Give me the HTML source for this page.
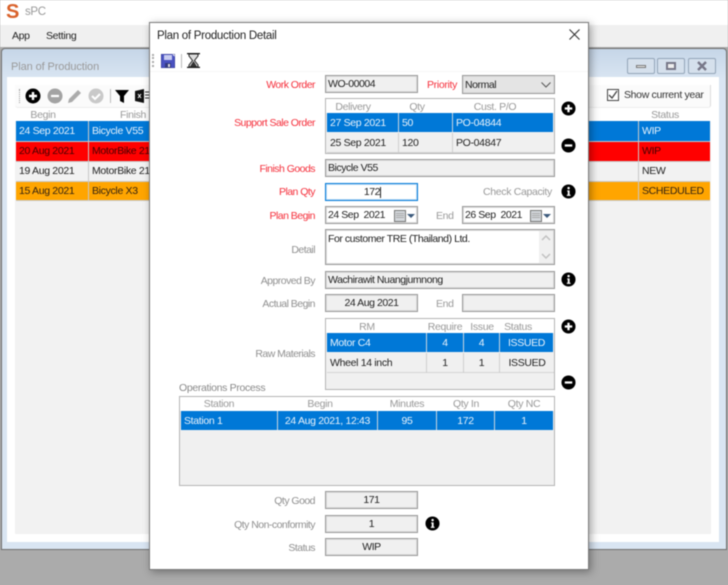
<!DOCTYPE html>
<html><head><meta charset="utf-8">
<style>
html,body{margin:0;padding:0;width:728px;height:585px;overflow:hidden;background:#ababab}
#r{position:absolute;left:0;top:0;width:728px;height:585px;overflow:hidden;font-family:"Liberation Sans",sans-serif;font-size:10.5px;letter-spacing:-.33px;color:#222;filter:blur(.45px)}
#r div,#r svg{position:absolute;box-sizing:border-box}
.t{white-space:nowrap;line-height:14px;height:14px}
.lb{white-space:nowrap;line-height:14px;height:14px;right:413px;text-align:right;color:#909090;letter-spacing:-.53px}
.red{color:#f5303c}
.in{background:#f0f0f0;border:1px solid #999;box-shadow:inset 0 0 0 1px #dcdcdc;line-height:17px;padding-left:2px;white-space:nowrap;color:#222;letter-spacing:-.45px}
.c{text-align:center;padding-left:0}
.g{background:#f0f0f0;border:1px solid #b4b4b4}
.h{color:#999;text-align:center;line-height:14px;height:14px;white-space:nowrap}
.cell{line-height:20px;height:19px;white-space:nowrap;padding-left:3px;border-right:1px solid #c8d4e0}
.sel{background:#0078d7;color:#e8f2fb}
.nor{background:#f0f0f0;color:#222;border-right-color:#cfcfcf;border-bottom:1px solid #d4d4d4}
.cc{text-align:center;padding-left:0}
</style></head><body>
<div id="r">
<svg width="0" height="0" style="position:absolute">
<symbol id="plus" viewBox="0 0 16 16"><circle cx="8" cy="8" r="7.5" fill="#000"/><path d="M8 4v8M4 8h8" stroke="#fff" stroke-width="2.4"/></symbol>
<symbol id="minus" viewBox="0 0 16 16"><circle cx="8" cy="8" r="7.5" fill="#000"/><path d="M4 8h8" stroke="#fff" stroke-width="2.4"/></symbol>
<symbol id="info" viewBox="0 0 16 16"><circle cx="8" cy="8" r="7.5" fill="#000"/><path d="M6.6 6.8h2.6v4.6h1v1.2H6.2v-1.2h1V8H6.6z" fill="#fff"/><circle cx="8.1" cy="4.4" r="1.3" fill="#fff"/></symbol>
<symbol id="cal" viewBox="0 0 24 12"><rect x=".5" y=".5" width="11" height="11" fill="#d4d8dc" stroke="#777"/><path d="M2 3.500h8M2 5.500h8M2 7.500h8" stroke="#aaa"/><path d="M13 4h8l-4 4z" fill="#3c5a7c"/></symbol>
</svg>

<!-- app chrome -->
<div style="left:0;top:0;width:728px;height:25px;background:#fff"></div>
<div class="t" style="left:6px;top:1px;font:bold 20px 'Liberation Sans',sans-serif;letter-spacing:0;line-height:22px;height:22px;color:#d9622b">S</div>
<div class="t" style="left:25px;top:5px;color:#999;font-size:11.500px">sPC</div>
<div style="left:0;top:25px;width:728px;height:22px;background:#f0f0f0"></div>
<div class="t" style="left:12px;top:29px">App</div>
<div class="t" style="left:46px;top:29px">Setting</div>

<!-- child window -->
<div style="left:1px;top:48px;width:726px;height:502px;background:linear-gradient(#c6d6e8,#d9e5f2 30px);border:1px solid #6f6f6f;border-radius:4px 4px 0 0"></div>
<div style="left:7px;top:77px;width:712px;height:465px;background:#fff"></div>
<div style="left:15px;top:121px;width:696px;height:413px;background:#f2f2f2"></div>
<div class="t" style="left:11px;top:60px;color:#9a9a9a;font-size:11px;letter-spacing:-.1px">Plan of Production</div>
<div style="left:627px;top:58px;width:28px;height:16px;border:1px solid #93a5b8;border-radius:2px;background:#d5e0ec"></div>
<div style="left:636px;top:65px;width:10px;height:3px;background:#eee;border:1px solid #777"></div>
<div style="left:657px;top:58px;width:28px;height:16px;border:1px solid #93a5b8;border-radius:2px;background:#d5e0ec"></div>
<div style="left:666px;top:62px;width:10px;height:8px;background:#eee;border:2px solid #778"></div>
<div style="left:688px;top:58px;width:28px;height:16px;border:1px solid #93a5b8;border-radius:2px;background:#d5e0ec"></div>
<svg style="left:697px;top:61px" width="10" height="10"><path d="M1 1l8 8M9 1l-8 8" stroke="#778" stroke-width="2.4"/></svg>

<!-- child toolbar -->
<div style="left:15px;top:85px;width:696px;height:23px;background:#fbfbfb;border-right:1px solid #dcdcdc;border-bottom:1px solid #eee;border-radius:0 0 3px 3px"></div>
<div style="left:19px;top:89px;width:1px;height:14px;border-left:1px dotted #999"></div>
<svg style="left:25px;top:88px" width="16" height="16"><use href="#plus"/></svg>
<svg style="left:47px;top:88px" width="16" height="16"><circle cx="8" cy="8" r="7.5" fill="#a3a3a3"/><path d="M4 8h8" stroke="#fff" stroke-width="2.2"/></svg>
<svg style="left:67px;top:88px" width="16" height="16"><path d="M1 15l1-4L11 2l3 3-9 9z" fill="#ababab"/></svg>
<svg style="left:88px;top:88px" width="16" height="16"><circle cx="8" cy="8" r="7.5" fill="#c9c9c9"/><path d="M4 8l3 3 5-5" stroke="#fff" stroke-width="2" fill="none"/></svg>
<div style="left:110px;top:89px;width:1px;height:14px;background:#bbb"></div>
<svg style="left:115px;top:89px" width="15" height="15"><path d="M0 1h14L9 7v7l-4-2V7z" fill="#000"/></svg>
<svg style="left:135px;top:89px" width="15" height="14"><path d="M0 2l9-2v14l-9-2z" fill="#111"/><path d="M3 5l3 4M6 5L3 9" stroke="#fff"/><path d="M10 3h5M10 6h5M10 9h5" stroke="#333"/></svg>
<div class="h" style="left:16px;top:108px;width:54px">Begin</div>
<div class="t" style="left:120px;top:108px;color:#999">Finish G</div>
<div class="h" style="left:638px;top:108px;width:54px">Status</div>
<div style="left:607px;top:89px;width:12px;height:12px;border:1px solid #444;background:#fff"></div>
<svg style="left:608px;top:90px" width="10" height="10"><path d="M1 5l3 3 5-7" stroke="#444" stroke-width="1.3" fill="none"/></svg>
<div class="t" style="left:624px;top:88px;color:#333">Show current year</div>

<!-- background rows -->
<div style="left:16px;top:121px;width:694px;height:20px;background:#0078d7"></div>
<div style="left:16px;top:141px;width:694px;height:20px;background:#f00"></div>
<div style="left:16px;top:161px;width:694px;height:20px;background:#f2f2f2"></div>
<div style="left:16px;top:181px;width:694px;height:19px;background:#ffa500"></div>
<div style="left:16px;top:141px;width:694px;height:1px;background:#c0c8d0"></div>
<div style="left:16px;top:161px;width:694px;height:1px;background:#c8c8c8"></div>
<div style="left:16px;top:181px;width:694px;height:1px;background:#c8c8c8"></div>
<div style="left:16px;top:200px;width:694px;height:1px;background:#c8c8c8"></div>
<div style="left:88px;top:121px;width:1px;height:80px;background:#c8c8c8"></div>
<div style="left:638px;top:121px;width:1px;height:80px;background:#c8c8c8"></div>
<div class="t" style="left:19px;top:124px;color:#e8f2fb">24 Sep 2021</div>
<div class="t" style="left:92px;top:124px;color:#e8f2fb">Bicycle V55</div>
<div class="t" style="left:642px;top:124px;color:#e8f2fb">WIP</div>
<div class="t" style="left:19px;top:144px;color:#400">20 Aug 2021</div>
<div class="t" style="left:92px;top:144px;color:#400">MotorBike 21</div>
<div class="t" style="left:642px;top:144px;color:#400">WIP</div>
<div class="t" style="left:19px;top:164px">19 Aug 2021</div>
<div class="t" style="left:92px;top:164px">MotorBike 21</div>
<div class="t" style="left:642px;top:164px">NEW</div>
<div class="t" style="left:19px;top:184px;color:#321">15 Aug 2021</div>
<div class="t" style="left:92px;top:184px;color:#321">Bicycle X3</div>
<div class="t" style="left:642px;top:184px;color:#321">SCHEDULED</div>

<!-- dialog -->
<div style="left:149px;top:22px;width:440px;height:548px;background:#fff;border:1px solid #7a7a7a;box-shadow:2px 2px 8px rgba(0,0,0,.35)"></div>
<div class="t" style="left:157px;top:29px;color:#222;font-size:11.500px;letter-spacing:-.28px">Plan of Production Detail</div>
<svg style="left:569px;top:29px" width="11" height="11"><path d="M.5.5l10 10M10.500.5l-10 10" stroke="#333" stroke-width="1.1"/></svg>
<div style="left:150px;top:48px;width:438px;height:24px;background:#fff;border-bottom:1px solid #f6f6f6"></div>
<div style="left:152px;top:54px;width:2px;height:13px;border-left:2px dotted #aaa"></div>
<svg style="left:161px;top:54px" width="14" height="14"><path d="M0 0h11l3 3v11H0z" fill="#4a52c0"/><path d="M0 0h14v14H0z" fill="none" stroke="#2b2f88" stroke-width=".8"/><rect x="3" y="1" width="8" height="5" fill="#c8ccf0"/><rect x="4" y="9" width="6" height="5" fill="#333a80"/><rect x="7" y="10" width="2" height="3" fill="#ddd"/></svg>
<div style="left:181px;top:54px;width:1px;height:14px;background:#bbb"></div>
<svg style="left:187px;top:53px" width="13" height="15"><path d="M0 .5h13M0 14.500h13" stroke="#111" stroke-width="1.4"/><path d="M2 1h9v2L7.500 7.500 11 12v2H2v-2l3.500-4.500L2 3z" fill="#ddd" stroke="#222"/><path d="M6.500 8L3 13.500h7z" fill="#333"/></svg>

<div class="lb red" style="top:78px">Work Order</div>
<div class="lb red" style="top:116px">Support Sale Order</div>
<div class="lb red" style="top:162px">Finish Goods</div>
<div class="lb red" style="top:185px">Plan Qty</div>
<div class="lb red" style="top:209px">Plan Begin</div>
<div class="lb" style="top:243px">Detail</div>
<div class="lb" style="top:274px">Approved By</div>
<div class="lb" style="top:297px">Actual Begin</div>
<div class="lb" style="top:347px">Raw Materials</div>
<div class="lb" style="top:518px">Qty Non-conformity</div>
<div class="lb" style="top:494px">Qty Good</div>
<div class="lb" style="top:541px">Status</div>
<div class="t red" style="left:427px;top:78px">Priority</div>
<div class="t" style="left:483px;top:185px;color:#999">Check Capacity</div>
<div class="t" style="left:436px;top:209px;color:#999">End</div>
<div class="t" style="left:436px;top:297px;color:#999">End</div>
<div class="t" style="left:179px;top:381px;color:#8a8a8a">Operations Process</div>

<div class="in" style="left:325px;top:75px;width:93px;height:18px">WO-00004</div>
<div class="in" style="left:462px;top:75px;width:93px;height:19px;background:#e4e4e4;line-height:18px">Normal</div>
<svg style="left:541px;top:82px" width="10" height="6"><path d="M.5.5L5 5 9.500.5" stroke="#555" fill="none"/></svg>

<!-- sale order grid -->
<div class="g" style="left:325px;top:98px;width:230px;height:56px"></div>
<div style="left:326px;top:99px;width:228px;height:14px;background:#fff"></div>
<div class="h" style="left:327px;top:100px;width:52px">Delivery</div>
<div class="h" style="left:399px;top:100px;width:36px">Qty</div>
<div class="h" style="left:453px;top:100px;width:84px">Cust. P/O</div>
<div class="cell sel" style="left:327px;top:113px;width:72px">27 Sep 2021</div>
<div class="cell sel" style="left:399px;top:113px;width:54px">50</div>
<div class="cell sel" style="left:453px;top:113px;width:100px;border-right:0">PO-04844</div>
<div class="cell nor" style="left:327px;top:133px;width:72px;height:20px">25 Sep 2021</div>
<div class="cell nor" style="left:399px;top:133px;width:54px;height:20px">120</div>
<div class="cell nor" style="left:453px;top:133px;width:101px;height:20px;border-right:0">PO-04847</div>
<svg style="left:561px;top:101px" width="15" height="15"><use href="#plus"/></svg>
<svg style="left:561px;top:138px" width="15" height="15"><use href="#minus"/></svg>

<div class="in" style="left:325px;top:159px;width:230px;height:18px">Bicycle V55</div>
<div class="in" style="left:325px;top:183px;width:93px;height:18px;background:#fff;border:1px solid #0078d7;box-shadow:inset 0 0 0 1px #bcdcf5;text-align:right;padding-right:37px">172</div>
<div style="left:380px;top:187px;width:1px;height:11px;background:#222"></div>
<svg style="left:561px;top:184px" width="15" height="15"><use href="#info"/></svg>

<div class="in" style="left:325px;top:206px;width:93px;height:18px;background:#fff;padding-left:2px">24 Sep&nbsp; 2021</div>
<svg style="left:394px;top:210px" width="24" height="12"><use href="#cal"/></svg>
<div class="in" style="left:462px;top:206px;width:93px;height:18px;background:#fff;padding-left:2px">26 Sep&nbsp; 2021</div>
<svg style="left:530px;top:210px" width="24" height="12"><use href="#cal"/></svg>

<div class="in" style="left:325px;top:229px;width:230px;height:36px;background:#fff;line-height:14px;padding-top:2px">For customer TRE (Thailand) Ltd.</div>
<div style="left:539px;top:231px;width:14px;height:32px;background:#f0f0f0"></div>
<svg style="left:541px;top:235px" width="10" height="24"><path d="M1 5l4-4 4 4M1 19l4 4 4-4" stroke="#c0c0c0" stroke-width="1.4" fill="none"/></svg>

<div class="in" style="left:325px;top:271px;width:230px;height:18px">Wachirawit Nuangjumnong</div>
<svg style="left:561px;top:272px" width="15" height="15"><use href="#info"/></svg>
<div class="in c" style="left:325px;top:294px;width:93px;height:18px">24 Aug 2021</div>
<div class="in" style="left:462px;top:294px;width:93px;height:18px"></div>

<!-- RM grid -->
<div class="g" style="left:325px;top:318px;width:230px;height:72px"></div>
<div style="left:326px;top:319px;width:228px;height:14px;background:#fff"></div>
<div class="h" style="left:327px;top:320px;width:80px">RM</div>
<div class="h" style="left:427px;top:320px;width:36px">Require</div>
<div class="h" style="left:464px;top:320px;width:36px">Issue</div>
<div class="h" style="left:500px;top:320px;width:36px">Status</div>
<div class="cell sel" style="left:327px;top:333px;width:100px">Motor C4</div>
<div class="cell sel cc" style="left:427px;top:333px;width:37px">4</div>
<div class="cell sel cc" style="left:464px;top:333px;width:36px">4</div>
<div class="cell sel cc" style="left:500px;top:333px;width:53px;border-right:0">ISSUED</div>
<div class="cell nor" style="left:327px;top:353px;width:100px;height:20px">Wheel 14 inch</div>
<div class="cell nor cc" style="left:427px;top:353px;width:37px;height:20px">1</div>
<div class="cell nor cc" style="left:464px;top:353px;width:36px;height:20px">1</div>
<div class="cell nor cc" style="left:500px;top:353px;width:54px;height:20px;border-right:0">ISSUED</div>
<svg style="left:561px;top:319px" width="15" height="15"><use href="#plus"/></svg>
<svg style="left:561px;top:375px" width="15" height="15"><use href="#minus"/></svg>

<!-- Operations grid -->
<div class="g" style="left:179px;top:396px;width:376px;height:90px"></div>
<div style="left:180px;top:397px;width:374px;height:14px;background:#fff"></div>
<div class="h" style="left:181px;top:397px;width:76px">Station</div>
<div class="h" style="left:278px;top:397px;width:84px">Begin</div>
<div class="h" style="left:378px;top:397px;width:58px">Minutes</div>
<div class="h" style="left:437px;top:397px;width:58px">Qty In</div>
<div class="h" style="left:495px;top:397px;width:58px">Qty NC</div>
<div class="cell sel" style="left:181px;top:411px;width:97px">Station 1</div>
<div class="cell sel cc" style="left:278px;top:411px;width:100px">24 Aug 2021, 12:43</div>
<div class="cell sel cc" style="left:378px;top:411px;width:59px">95</div>
<div class="cell sel cc" style="left:437px;top:411px;width:58px">172</div>
<div class="cell sel cc" style="left:495px;top:411px;width:58px;border-right:0">1</div>

<div class="in c" style="left:325px;top:491px;width:93px;height:18px">171</div>
<div class="in c" style="left:325px;top:515px;width:93px;height:18px">1</div>
<div class="in c" style="left:325px;top:538px;width:93px;height:18px">WIP</div>
<svg style="left:425px;top:516px" width="15" height="15"><use href="#info"/></svg>
</div>
</body></html>
